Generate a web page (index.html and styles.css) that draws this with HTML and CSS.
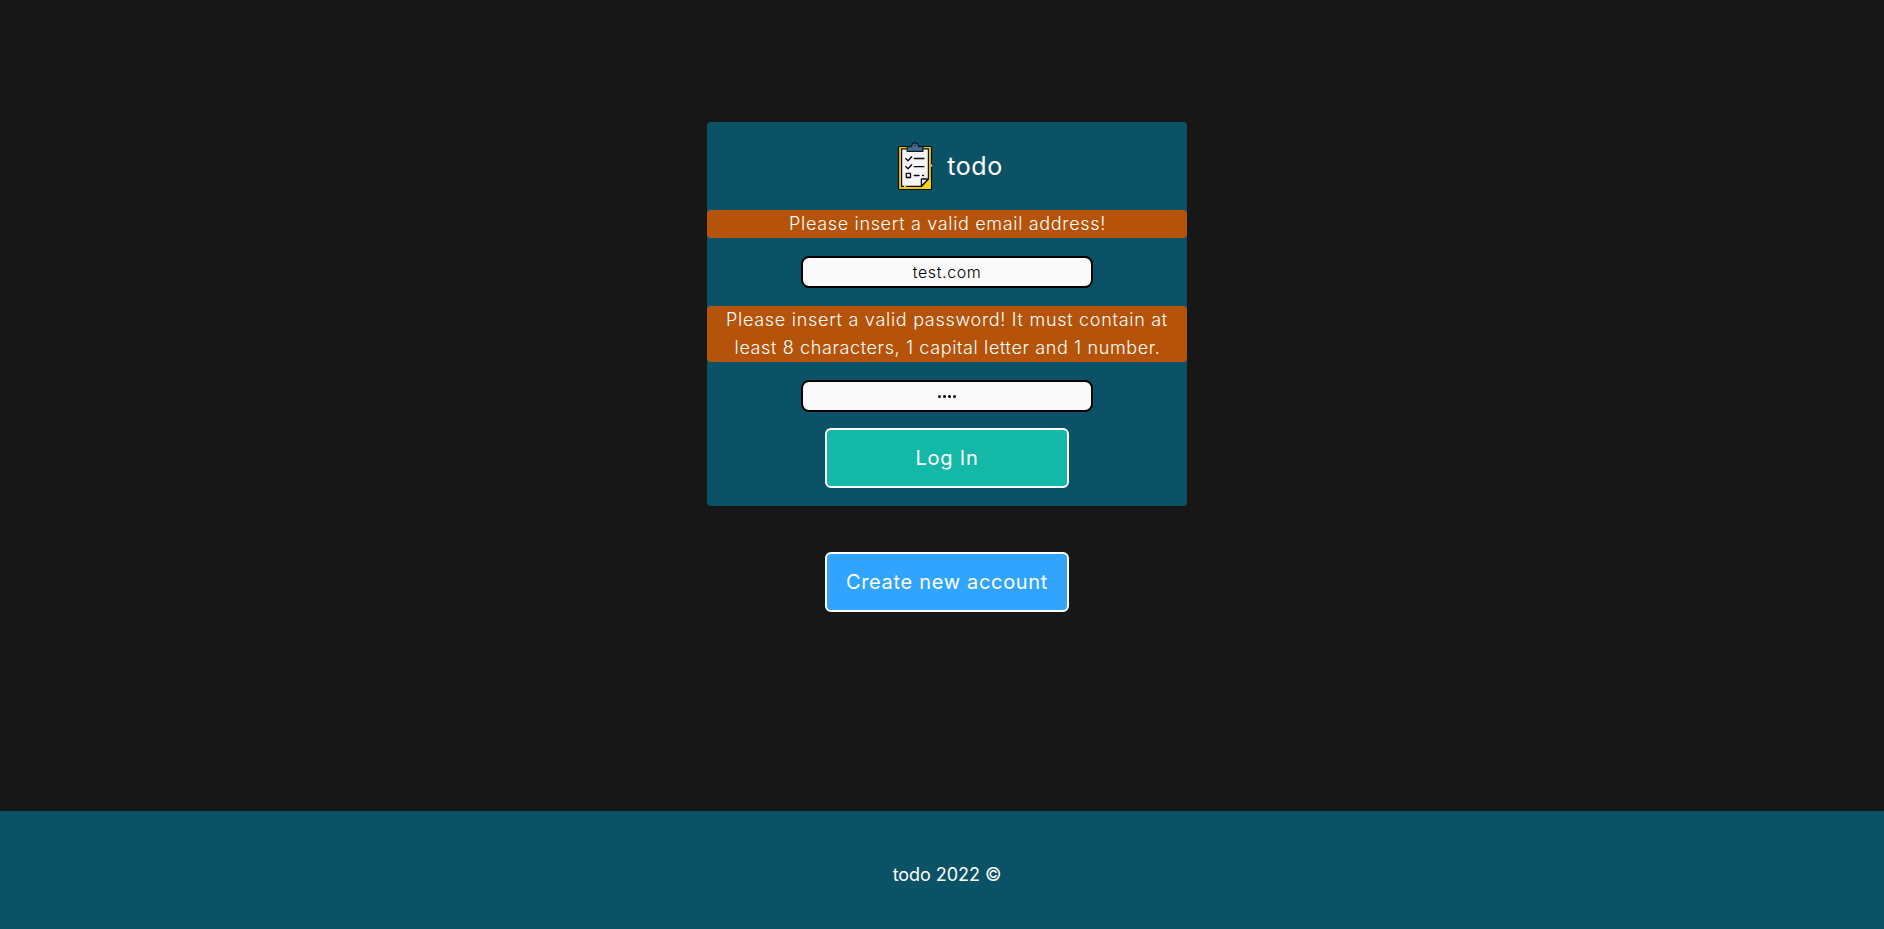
FILE: index.html
```html
<!DOCTYPE html>
<html lang="en">
<head>
<meta charset="utf-8">
<title>todo</title>
<link rel="stylesheet" href="styles.css">
</head>
<body>
<main class="main">
  <form class="card">
    <div class="brand">
      <svg class="logo" viewBox="0 0 48 48" aria-hidden="true">
        <rect x="7.500" y="4.500" width="33" height="43" rx="1" fill="#f5c400" stroke="#050b10" stroke-width="1.200"/>
        <path d="M30 46.800 39.800 36v10.800z" fill="#ffd20a"/>
        <path d="M10.600 6.900h26.800v30l-7 7.500H10.600z" fill="#f5f5f5" stroke="#050b10" stroke-width="1.200"/>
        <path d="M37.300 37h-6.900v7.300z" fill="#f5f5f5" stroke="#050b10" stroke-width="1.300" stroke-linejoin="round"/>
        <path d="M16.200 9.400V5.700q0-1 1-1h3.400C20.900-.4 27.100-.4 27.500 4.700h3.400q1 0 1 1v3.700z" fill="#4c6d89" stroke="#0b1c2b" stroke-width="1.200"/>
        <circle cx="24" cy="3.600" r=".8" fill="#0b2b3d"/>
        <g fill="none" stroke="#050b10" stroke-width="1.300" stroke-linecap="round" stroke-linejoin="round">
          <path d="m14.700 16.600 2.300 2.100 3.700-4M23.300 16.500h9.600M14.700 24.600l2.300 2.100 3.700-4M23.300 24.700h9.600M23.300 33.500h4.700M31.500 33.500h1"/>
          <path d="M15.300 31.300h4.200v4.200h-4.200z"/>
        </g>
        <path d="M13 44.400h2.200M40.500 22.500v2" stroke="#ffd98a" stroke-width="1.300"/>
      </svg>
      <span class="brand-name">todo</span>
    </div>
    <p class="alert alert-email">Please insert a valid email address!</p>
    <input class="field" type="text" value="test.com" aria-label="Email">
    <p class="alert alert-password"><span class="line-first">Please insert a valid password! It must contain at</span><br><span class="line-second">least 8 characters, 1 capital letter and 1 number.</span></p>
    <div class="field mask" aria-label="Password"><i class="dot"></i><i class="dot"></i><i class="dot"></i><i class="dot"></i></div>
    <button class="button login" type="button">Log In</button>
  </form>
  <button class="button create" type="button">Create new account</button>
</main>
<footer class="footer"><span class="copyright">todo 2022 ©</span></footer>
</body>
</html>
```
FILE: styles.css
```css
* { box-sizing: border-box; }
body {
  margin: 0;
  height: 929px;
  display: flex;
  flex-direction: column;
  overflow: hidden;
  background: #171717;
  color: #fff;
  font: 300 18px/28px Inter, sans-serif;
}
.main {
  flex: 1;
  display: flex;
  flex-direction: column;
  align-items: center;
  gap: 46px;
  padding: 122px 0 0 10px;
}
.card {
  width: 480px;
  height: 384px;
  display: flex;
  flex-direction: column;
  align-items: center;
  background: #0c5267;
  border-radius: 4px;
}
.brand {
  height: 88px;
  display: flex;
  align-items: center;
  gap: 8px;
}
.logo { width: 48px; height: 48px; }
.brand-name { font-size: 25px; font-weight: 400; letter-spacing: .6px; }
.alert {
  width: 100%;
  margin: 0;
  text-align: center;
  white-space: nowrap;
  background: #b45309;
  border-radius: 4px;
}
.alert-email { padding-left: 1px; letter-spacing: .67px; }
.line-first { letter-spacing: .71px; }
.line-second { padding-left: 1px; letter-spacing: .62px; }
.field {
  width: 292px;
  height: 32px;
  flex: none;
  margin: 18px 0;
  padding: 0;
  border: 2px solid #000;
  border-radius: 8px;
  background: #fafafa;
  color: #000;
  font: 300 16px/24px Inter, sans-serif;
  letter-spacing: .6px;
  text-align: center;
}
.mask {
  display: flex;
  justify-content: center;
  align-items: center;
  gap: 2px;
  margin-bottom: 16px;
}
.dot { width: 3px; height: 3px; border-radius: 50%; background: #000; }
.button {
  width: 244px;
  height: 60px;
  flex: none;
  padding: 0;
  border: 2px solid #fff;
  border-radius: 6px;
  color: #fff;
  font: 400 20px/28px Inter, sans-serif;
  white-space: nowrap;
}
.login { background: #14b8a6; letter-spacing: .8px; }
.create { background: #30a4ff; letter-spacing: .68px; }
.footer {
  height: 118px;
  display: flex;
  justify-content: center;
  align-items: center;
  padding: 10px 0 0 10px;
  background: #0c5267;
  font-weight: 400;
}
.copyright { letter-spacing: -.05px; }
```
